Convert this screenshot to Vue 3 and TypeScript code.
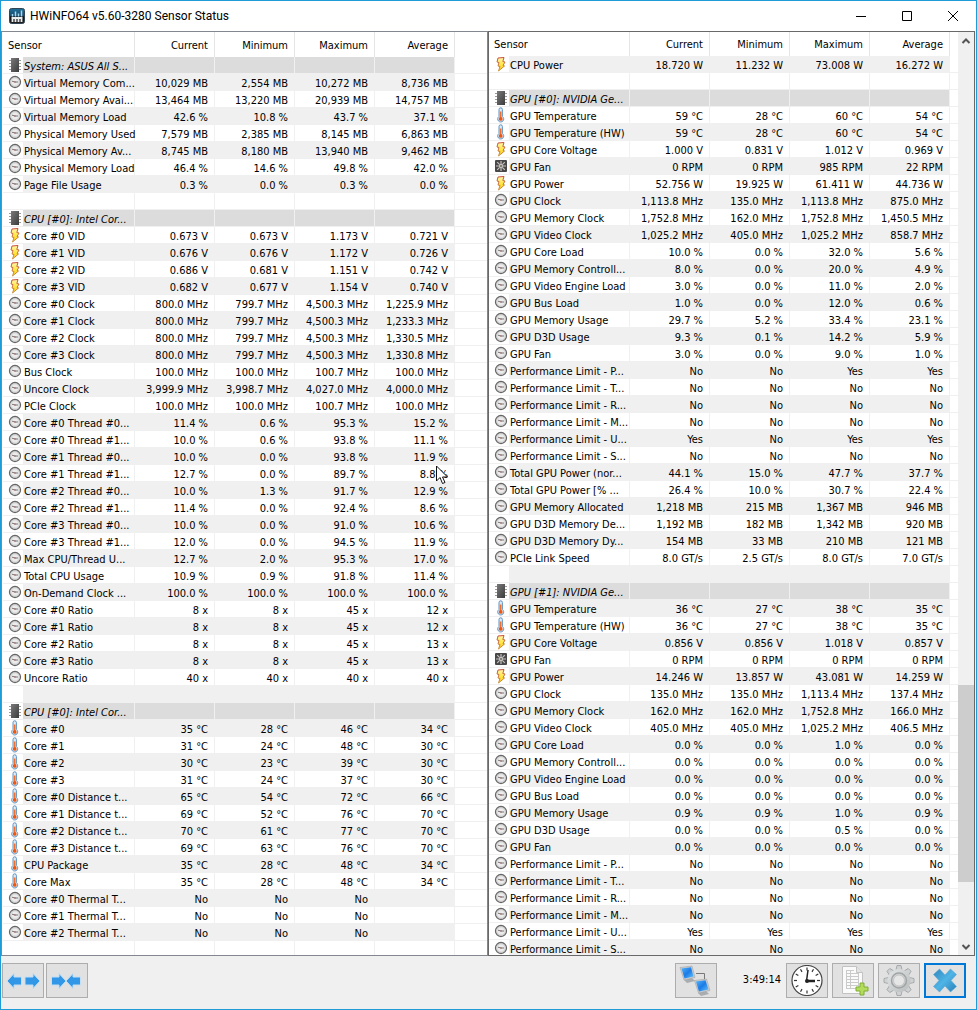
<script setup lang="ts">
interface Row {
  kind: string
  name: string
  values: string[]
}

const icons: Record<string, string> = {
  g: 'chip',
  c: 'gauge',
  v: 'bolt',
  t: 'thermo',
  f: 'fan',
}

function parse(source: string): Row[] {
  return source
    .trim()
    .split('\n')
    .map((line) => {
      const [kind, name = '', ...values] = line.trim().split('|')
      while (values.length < 4) values.push('')
      return { kind, name, values }
    })
}

const left = parse(`
g|System: ASUS All S...
c|Virtual Memory Com...|10,029 MB|2,554 MB|10,272 MB|8,736 MB
c|Virtual Memory Avai...|13,464 MB|13,220 MB|20,939 MB|14,757 MB
c|Virtual Memory Load|42.6 %|10.8 %|43.7 %|37.1 %
c|Physical Memory Used|7,579 MB|2,385 MB|8,145 MB|6,863 MB
c|Physical Memory Av...|8,745 MB|8,180 MB|13,940 MB|9,462 MB
c|Physical Memory Load|46.4 %|14.6 %|49.8 %|42.0 %
c|Page File Usage|0.3 %|0.0 %|0.3 %|0.0 %
-|
g|CPU [#0]: Intel Cor...
v|Core #0 VID|0.673 V|0.673 V|1.173 V|0.721 V
v|Core #1 VID|0.676 V|0.676 V|1.172 V|0.726 V
v|Core #2 VID|0.686 V|0.681 V|1.151 V|0.742 V
v|Core #3 VID|0.682 V|0.677 V|1.154 V|0.740 V
c|Core #0 Clock|800.0 MHz|799.7 MHz|4,500.3 MHz|1,225.9 MHz
c|Core #1 Clock|800.0 MHz|799.7 MHz|4,500.3 MHz|1,233.3 MHz
c|Core #2 Clock|800.0 MHz|799.7 MHz|4,500.3 MHz|1,330.5 MHz
c|Core #3 Clock|800.0 MHz|799.7 MHz|4,500.3 MHz|1,330.8 MHz
c|Bus Clock|100.0 MHz|100.0 MHz|100.7 MHz|100.0 MHz
c|Uncore Clock|3,999.9 MHz|3,998.7 MHz|4,027.0 MHz|4,000.0 MHz
c|PCIe Clock|100.0 MHz|100.0 MHz|100.7 MHz|100.0 MHz
c|Core #0 Thread #0...|11.4 %|0.6 %|95.3 %|15.2 %
c|Core #0 Thread #1...|10.0 %|0.6 %|93.8 %|11.1 %
c|Core #1 Thread #0...|10.0 %|0.0 %|93.8 %|11.9 %
c|Core #1 Thread #1...|12.7 %|0.0 %|89.7 %|8.8 %
c|Core #2 Thread #0...|10.0 %|1.3 %|91.7 %|12.9 %
c|Core #2 Thread #1...|11.4 %|0.0 %|92.4 %|8.6 %
c|Core #3 Thread #0...|10.0 %|0.0 %|91.0 %|10.6 %
c|Core #3 Thread #1...|12.0 %|0.0 %|94.5 %|11.9 %
c|Max CPU/Thread U...|12.7 %|2.0 %|95.3 %|17.0 %
c|Total CPU Usage|10.9 %|0.9 %|91.8 %|11.4 %
c|On-Demand Clock ...|100.0 %|100.0 %|100.0 %|100.0 %
c|Core #0 Ratio|8 x|8 x|45 x|12 x
c|Core #1 Ratio|8 x|8 x|45 x|12 x
c|Core #2 Ratio|8 x|8 x|45 x|13 x
c|Core #3 Ratio|8 x|8 x|45 x|13 x
c|Uncore Ratio|40 x|40 x|40 x|40 x
-|
g|CPU [#0]: Intel Cor...
t|Core #0|35 °C|28 °C|46 °C|34 °C
t|Core #1|31 °C|24 °C|48 °C|30 °C
t|Core #2|30 °C|23 °C|39 °C|30 °C
t|Core #3|31 °C|24 °C|37 °C|30 °C
t|Core #0 Distance t...|65 °C|54 °C|72 °C|66 °C
t|Core #1 Distance t...|69 °C|52 °C|76 °C|70 °C
t|Core #2 Distance t...|70 °C|61 °C|77 °C|70 °C
t|Core #3 Distance t...|69 °C|63 °C|76 °C|70 °C
t|CPU Package|35 °C|28 °C|48 °C|34 °C
t|Core Max|35 °C|28 °C|48 °C|34 °C
c|Core #0 Thermal T...|No|No|No
c|Core #1 Thermal T...|No|No|No
c|Core #2 Thermal T...|No|No|No
-|
`)

const right = parse(`
v|CPU Power|18.720 W|11.232 W|73.008 W|16.272 W
-|
g|GPU [#0]: NVIDIA Ge...
t|GPU Temperature|59 °C|28 °C|60 °C|54 °C
t|GPU Temperature (HW)|59 °C|28 °C|60 °C|54 °C
v|GPU Core Voltage|1.000 V|0.831 V|1.012 V|0.969 V
f|GPU Fan|0 RPM|0 RPM|985 RPM|22 RPM
v|GPU Power|52.756 W|19.925 W|61.411 W|44.736 W
c|GPU Clock|1,113.8 MHz|135.0 MHz|1,113.8 MHz|875.0 MHz
c|GPU Memory Clock|1,752.8 MHz|162.0 MHz|1,752.8 MHz|1,450.5 MHz
c|GPU Video Clock|1,025.2 MHz|405.0 MHz|1,025.2 MHz|858.7 MHz
c|GPU Core Load|10.0 %|0.0 %|32.0 %|5.6 %
c|GPU Memory Controll...|8.0 %|0.0 %|20.0 %|4.9 %
c|GPU Video Engine Load|3.0 %|0.0 %|11.0 %|2.0 %
c|GPU Bus Load|1.0 %|0.0 %|12.0 %|0.6 %
c|GPU Memory Usage|29.7 %|5.2 %|33.4 %|23.1 %
c|GPU D3D Usage|9.3 %|0.1 %|14.2 %|5.9 %
c|GPU Fan|3.0 %|0.0 %|9.0 %|1.0 %
c|Performance Limit - P...|No|No|Yes|Yes
c|Performance Limit - T...|No|No|No|No
c|Performance Limit - R...|No|No|No|No
c|Performance Limit - M...|No|No|No|No
c|Performance Limit - U...|Yes|No|Yes|Yes
c|Performance Limit - S...|No|No|No|No
c|Total GPU Power (nor...|44.1 %|15.0 %|47.7 %|37.7 %
c|Total GPU Power [% ...|26.4 %|10.0 %|30.7 %|22.4 %
c|GPU Memory Allocated|1,218 MB|215 MB|1,367 MB|946 MB
c|GPU D3D Memory De...|1,192 MB|182 MB|1,342 MB|920 MB
c|GPU D3D Memory Dy...|154 MB|33 MB|210 MB|121 MB
c|PCIe Link Speed|8.0 GT/s|2.5 GT/s|8.0 GT/s|7.0 GT/s
-|
g|GPU [#1]: NVIDIA Ge...
t|GPU Temperature|36 °C|27 °C|38 °C|35 °C
t|GPU Temperature (HW)|36 °C|27 °C|38 °C|35 °C
v|GPU Core Voltage|0.856 V|0.856 V|1.018 V|0.857 V
f|GPU Fan|0 RPM|0 RPM|0 RPM|0 RPM
v|GPU Power|14.246 W|13.857 W|43.081 W|14.259 W
c|GPU Clock|135.0 MHz|135.0 MHz|1,113.4 MHz|137.4 MHz
c|GPU Memory Clock|162.0 MHz|162.0 MHz|1,752.8 MHz|166.0 MHz
c|GPU Video Clock|405.0 MHz|405.0 MHz|1,025.2 MHz|406.5 MHz
c|GPU Core Load|0.0 %|0.0 %|1.0 %|0.0 %
c|GPU Memory Controll...|0.0 %|0.0 %|0.0 %|0.0 %
c|GPU Video Engine Load|0.0 %|0.0 %|0.0 %|0.0 %
c|GPU Bus Load|0.0 %|0.0 %|0.0 %|0.0 %
c|GPU Memory Usage|0.9 %|0.9 %|1.0 %|0.9 %
c|GPU D3D Usage|0.0 %|0.0 %|0.5 %|0.0 %
c|GPU Fan|0.0 %|0.0 %|0.0 %|0.0 %
c|Performance Limit - P...|No|No|No|No
c|Performance Limit - T...|No|No|No|No
c|Performance Limit - R...|No|No|No|No
c|Performance Limit - M...|No|No|No|No
c|Performance Limit - U...|Yes|Yes|Yes|Yes
c|Performance Limit - S...|No|No|No|No
`)

const panels = [
  { id: 'left', rows: left, scroll: false },
  { id: 'right', rows: right, scroll: true },
]
const headings = ['Current', 'Minimum', 'Maximum', 'Average']
const ticks = Array.from({ length: 12 }, (_, i) => i * 30)
const teeth = Array.from({ length: 8 }, (_, i) => i * 45)
</script>

<template>
  <div class="window">
    <svg class="defs" width="0" height="0" aria-hidden="true">
      <defs>
        <linearGradient id="chipFill" x1="0" y1="0" x2="1" y2="1">
          <stop offset="0" stop-color="#7a7a7a" />
          <stop offset="1" stop-color="#3c3c3c" />
        </linearGradient>
        <linearGradient id="boltFill" x1="0" y1="0" x2="0" y2="1">
          <stop offset="0" stop-color="#fff6b0" />
          <stop offset="0.5" stop-color="#ffe848" />
          <stop offset="1" stop-color="#ffd000" />
        </linearGradient>
        <linearGradient id="boltEdge" x1="0" y1="0" x2="0" y2="1">
          <stop offset="0" stop-color="#c8503a" />
          <stop offset="1" stop-color="#c9954a" />
        </linearGradient>
        <linearGradient id="screen" x1="0" y1="0" x2="1" y2="1">
          <stop offset="0" stop-color="#58b4f8" />
          <stop offset="0.5" stop-color="#1a7be8" />
          <stop offset="1" stop-color="#67c4fb" />
        </linearGradient>
        <linearGradient id="steel" x1="0" y1="0" x2="1" y2="1">
          <stop offset="0" stop-color="#e4e6e6" />
          <stop offset="1" stop-color="#b8bcbd" />
        </linearGradient>
        <linearGradient id="crossFill" x1="0" y1="0" x2="1" y2="1">
          <stop offset="0" stop-color="#2f86bd" />
          <stop offset="0.5" stop-color="#4fb4e6" />
          <stop offset="1" stop-color="#2a7fb8" />
        </linearGradient>
        <linearGradient id="logoFill" x1="0" y1="0" x2="0" y2="1">
          <stop offset="0" stop-color="#1d6f9a" />
          <stop offset="0.5" stop-color="#1b4a68" />
          <stop offset="0.55" stop-color="#111" />
          <stop offset="1" stop-color="#222" />
        </linearGradient>
      </defs>
      <symbol id="chip" viewBox="0 0 16 16">
        <path d="M2 3.5h12M2 6.5h12M2 9.5h12M2 12.5h12" stroke="#9a9a9a" />
        <rect x="4" y="1" width="8" height="14" fill="url(#chipFill)" />
      </symbol>
      <symbol id="gauge" viewBox="0 0 16 16">
        <circle cx="8" cy="8" r="5.5" fill="#ececec" stroke="#666" stroke-width="1.3" />
        <circle cx="8" cy="8" r="4.2" fill="none" stroke="#c4c4c4" stroke-width="0.8" />
        <path d="M5 7.2l3 .8h3" stroke="#777" fill="none" />
        <circle cx="8" cy="8" r="0.8" fill="#a66" />
      </symbol>
      <symbol id="bolt" viewBox="0 0 16 16">
        <path d="M5 2l6-.5-1.200 4 2.200.5-2 3.500 1.500.5L5.500 15l1.500-4.500-2-.5 1-3.500-2-.5z" fill="url(#boltFill)" stroke="url(#boltEdge)" stroke-width="1" stroke-linejoin="round" />
      </symbol>
      <symbol id="thermo" viewBox="0 0 16 16">
        <path d="M6 9.500V2.500a1.700 1.700 0 0 1 3.400 0v7a3 3 0 1 1-3.400 0z" fill="#dcebf7" stroke="#5f92c0" />
        <path d="M7.700 4.500v7" stroke="#f07030" stroke-width="1.600" />
        <circle cx="7.700" cy="11.900" r="1.900" fill="#f0560f" />
      </symbol>
      <symbol id="fan" viewBox="0 0 16 16">
        <rect x="2" y="2" width="12" height="12" rx="1" fill="#484848" />
        <path d="M8 3v4M8 9v4M3 8h4M9 8h4M4.200 4.200l2.500 2.500M9.300 9.300l2.500 2.500M11.800 4.200L9.300 6.700M6.700 9.300l-2.500 2.500" stroke="#c9c0c0" stroke-width="1.200" />
        <circle cx="8" cy="8" r="1.600" fill="#776" stroke="#eee" stroke-width="0.600" />
      </symbol>
    </svg>

    <header class="titlebar">
      <svg class="logo" viewBox="0 0 16 16" aria-hidden="true">
        <rect x="0.500" y="0.500" width="15" height="15" rx="2" fill="url(#logoFill)" stroke="#345" />
        <path d="M3.500 6v2.500M6.500 3.500v5M9.500 5.500v3M12.500 2.500v6" stroke="#9fd8f2" stroke-width="1.500" />
        <path d="M2.500 10h11M3.500 10v4M6.500 10v4M9.500 10v4M12.500 10v4" stroke="#e8eef0" stroke-width="1.800" />
      </svg>
      <h1>HWiNFO64 v5.60-3280 Sensor Status</h1>
      <button type="button" class="caption" aria-label="Minimize">
        <svg viewBox="0 0 12 12"><path d="M1 6.500h10" /></svg>
      </button>
      <button type="button" class="caption" aria-label="Maximize">
        <svg viewBox="0 0 12 12"><path d="M1.500 1.500h9v9h-9z" /></svg>
      </button>
      <button type="button" class="caption" aria-label="Close">
        <svg viewBox="0 0 12 12"><path d="M1 1l10 10M11 1L1 11" /></svg>
      </button>
    </header>

    <main class="panels">
      <section v-for="panel in panels" :key="panel.id" class="panel" :class="panel.id">
        <div class="list">
          <table>
            <colgroup>
              <col class="col-icon" />
              <col class="col-name" />
              <col v-for="h in headings" :key="h" class="col-value" />
              <col />
            </colgroup>
            <thead>
              <tr>
                <th colspan="2" class="name" scope="col">Sensor</th>
                <th v-for="h in headings" :key="h" scope="col">{{ h }}</th>
                <td></td>
              </tr>
            </thead>
            <tbody>
              <tr v-for="(row, i) in panel.rows" :key="i" :class="{ group: row.kind === 'g' }">
                <td class="icon">
                  <svg v-if="icons[row.kind]" viewBox="0 0 16 16" aria-hidden="true">
                    <use :href="'#' + icons[row.kind]" />
                  </svg>
                </td>
                <td class="name">{{ row.name }}</td>
                <td v-for="(value, j) in row.values" :key="j" class="value">{{ value }}</td>
                <td class="rest"></td>
              </tr>
            </tbody>
          </table>
        </div>
        <div v-if="panel.scroll" class="scrollbar">
          <button type="button" aria-label="Scroll up">
            <svg viewBox="0 0 16 16"><path d="M4.500 10L8 6.500l3.500 3.500" /></svg>
          </button>
          <div class="above"></div>
          <div class="thumb"></div>
          <div class="below"></div>
          <button type="button" aria-label="Scroll down">
            <svg viewBox="0 0 16 16"><path d="M4.500 6L8 9.500l3.500-3.500" /></svg>
          </button>
        </div>
      </section>
    </main>

    <footer class="toolbar">
      <div class="pair">
        <button type="button" class="tool" aria-label="Expand columns">
          <svg viewBox="0 0 38 31">
            <path class="arrow" d="M3 16l7-7.500v3.500H17.500v8H10v3.500zM36 16l-7-7.500v3.500H21v8h8v3.500z" />
          </svg>
        </button>
        <button type="button" class="tool" aria-label="Shrink columns">
          <svg viewBox="0 0 38 31">
            <path class="arrow" d="M18 16l-7-7.500v3.500H3.500v8H11v3.500zM18 16l7-7.500v3.500h7.500v8H25v3.500z" />
          </svg>
        </button>
      </div>
      <div class="spacer"></div>
      <button type="button" class="tool" aria-label="Remote monitoring">
        <svg viewBox="0 0 38 31">
          <path d="M19 8.500h8.500v6" fill="none" stroke="#777" />
          <path d="M7 15l8-2 3 3-8 2z" fill="#a9adb0" />
          <path d="M3 2.500l12-1.500 3 11.500-11 2.500z" fill="#c9ced2" stroke="#999" stroke-width="0.500" />
          <path d="M4.500 3.500l9.500-1.200 2.500 9.200-9 2z" fill="url(#screen)" />
          <path d="M21 28l8-2 3 3-8 2z" fill="#a9adb0" />
          <path d="M17.500 15.500l12-1.500 3.500 11.500-11.500 2.500z" fill="#c9ced2" stroke="#999" stroke-width="0.500" />
          <path d="M19 16.500l9.500-1.200 3 9.200-9.500 2z" fill="url(#screen)" />
        </svg>
      </button>
      <time class="elapsed">3:49:14</time>
      <button type="button" class="tool" aria-label="Reset clock">
        <svg viewBox="0 0 38 31">
          <circle cx="19" cy="15.500" r="15" fill="#fff" stroke="#444" stroke-width="1.200" />
          <path v-for="a in ticks" :key="a" d="M19 2.500v3" :transform="`rotate(${a} 19 15.500)`" stroke="#333" stroke-width="1.200" />
          <path d="M18.500 16L20 5" stroke="#222" stroke-width="1.500" />
          <path d="M18 16h9" stroke="#222" stroke-width="2.500" />
          <circle cx="19" cy="16" r="2" fill="#222" />
        </svg>
      </button>
      <button type="button" class="tool" aria-label="Start logging">
        <svg viewBox="0 0 38 31">
          <path d="M8.500 1.500h14l6 6v21h-20z" fill="#fafafa" stroke="#c2c2c2" />
          <path d="M22.500 1.500v6h6" fill="#e4e4e4" stroke="#c2c2c2" />
          <path d="M12 5.500h8M12 8.500h13M12 11.500h13M12 14.500h13M12 17.500h13M12 20.500h13M12 23.500h13M12.500 5v19M16.500 5v19M24.500 8v16" stroke="#cacaca" fill="none" />
          <path d="M26 18h4v4h4v4h-4v4h-4v-4h-4v-4h4z" fill="#b4dc5c" stroke="#7fae32" />
        </svg>
      </button>
      <button type="button" class="tool" aria-label="Settings">
        <svg viewBox="0 0 38 31">
          <g fill="#cfd2d3" stroke="#9a9e9f" stroke-width="0.800">
            <path v-for="a in teeth" :key="a" d="M15.500 7l1.500-6.500h4L22.500 7z" :transform="`rotate(${a} 19 15.500)`" />
          </g>
          <circle cx="19" cy="15.500" r="11.500" fill="url(#steel)" />
          <circle cx="19" cy="15.500" r="7.500" fill="none" stroke="#a0a4a5" stroke-width="1.500" />
          <circle cx="19" cy="15.500" r="5.500" fill="#e6e6e6" stroke="#c4c4c4" stroke-width="1" />
        </svg>
      </button>
      <button type="button" class="tool primary" aria-label="Close sensors">
        <svg viewBox="0 0 38 31">
          <path d="M13.500 4l5.500 6 5.500-6 6 5.500-5.500 6 5.500 6-6 5.500-5.500-6-5.500 6-6-5.500 5.500-6-5.500-6z" fill="url(#crossFill)" stroke="#5aa6d2" stroke-width="0.600" />
        </svg>
      </button>
    </footer>

    <svg class="cursor" viewBox="0 0 12 19" aria-hidden="true">
      <path d="M0.500 1v15l3.500-3.500 2.500 6 2.500-1-2.500-5.500H11.500z" fill="#fff" stroke="#111" />
    </svg>
  </div>
</template>

<style>
body {
  margin: 0;
  overflow: hidden;
}
</style>

<style scoped>
.window {
  box-sizing: border-box;
  position: relative;
  display: flex;
  flex-direction: column;
  height: 100vh;
  border: 1px solid #1f9bd8;
  background: #f0f0f0;
  color: #000;
  font: 11px/14px "DejaVu Sans Condensed", "DejaVu Sans", sans-serif;
}

.defs {
  position: absolute;
}

button {
  display: flex;
  align-items: center;
  justify-content: center;
  margin: 0;
  padding: 0;
  border: 0;
  background: none;
  font: inherit;
}

.titlebar {
  display: flex;
  flex: none;
  align-items: center;
  height: 30px;
  background: #fff;
}

.logo {
  width: 16px;
  height: 16px;
  margin: 0 5px 0 8px;
}

h1 {
  flex: 1;
  margin: 0;
  font: 12px/16px Roboto, "Open Sans", sans-serif;
}

.caption {
  width: 46px;
  height: 30px;
}

.caption svg {
  width: 12px;
  height: 12px;
  fill: none;
  stroke: #000;
}

.panels {
  display: flex;
  flex: 1;
  min-height: 0;
  padding-right: 1px;
}

.panel {
  box-sizing: border-box;
  display: flex;
  flex: 1 1 0;
  min-width: 0;
  border: 1px solid #828790;
  background: #fff;
}

.panel.right {
  border-color: #696969;
}

.list {
  flex: 1;
  min-width: 0;
  overflow: hidden;
}

.left .list {
  padding-left: 1px;
}

table {
  width: 100%;
  border-collapse: separate;
  border-spacing: 0;
  table-layout: fixed;
}

.col-icon {
  width: 20px;
}

.left .col-name {
  width: 112px;
}

.right .col-name {
  width: 121px;
}

.col-value {
  width: 80px;
}

td,
th {
  padding: 0;
  font-weight: normal;
  white-space: nowrap;
}

th {
  height: 22px;
  padding: 2px 6px 0 0;
  border-right: 1px solid #e5e5e5;
  text-align: right;
}

.left th {
  height: 23px;
}

th.name {
  padding-left: 5px;
  text-align: left;
}

tbody td {
  border-bottom: 1px solid #f0f0f0;
  line-height: 12px;
}

td.icon {
  height: 16px;
}

td.name,
td.value {
  height: 12px;
  border-right: 1px solid #f0f0f0;
}

td.name {
  padding: 4px 0 0 1px;
}

td.value {
  padding: 4px 6px 0 0;
  text-align: right;
}

.icon svg {
  display: block;
  width: 16px;
  height: 16px;
  margin-left: 4px;
}

.left tbody tr:nth-child(even):not(.group) .name,
.left tbody tr:nth-child(even):not(.group) .value,
.right tbody tr:nth-child(odd):not(.group) .name,
.right tbody tr:nth-child(odd):not(.group) .value {
  background: #f0f0f0;
}

.group .name,
.group .value {
  background: #dcdcdc;
  background-clip: padding-box;
}

.group .name {
  font-style: italic;
}

.scrollbar {
  display: flex;
  flex: none;
  flex-direction: column;
  width: 16px;
  background: #f0f0f0;
}

.scrollbar button {
  height: 17px;
}

.scrollbar svg {
  width: 16px;
  height: 16px;
  fill: none;
  stroke: #555;
  stroke-width: 2;
}

.above {
  flex: 636;
}

.thumb {
  flex: 197;
  background: #cdcdcd;
}

.below {
  flex: 56;
}

.toolbar {
  display: flex;
  flex: none;
  gap: 4px;
  height: 46px;
  padding: 7px 10px 0 1px;
}

.pair {
  display: flex;
  gap: 2px;
}

.tool {
  box-sizing: border-box;
  width: 42px;
  height: 35px;
  border: 1px solid #adadad;
  background: #e1e1e1;
}

.tool svg {
  flex: none;
  width: 38px;
  height: 31px;
}

.tool.primary {
  border: 2px solid #0078d7;
}

.arrow {
  fill: #3397e8;
  stroke: #c3def5;
  stroke-width: 1;
}

.spacer {
  flex: 1;
}

.elapsed {
  width: 60px;
  padding-right: 1px;
  text-align: right;
  line-height: 34px;
}

.cursor {
  position: absolute;
  top: 464px;
  left: 435px;
  width: 12px;
  height: 19px;
}
</style>
